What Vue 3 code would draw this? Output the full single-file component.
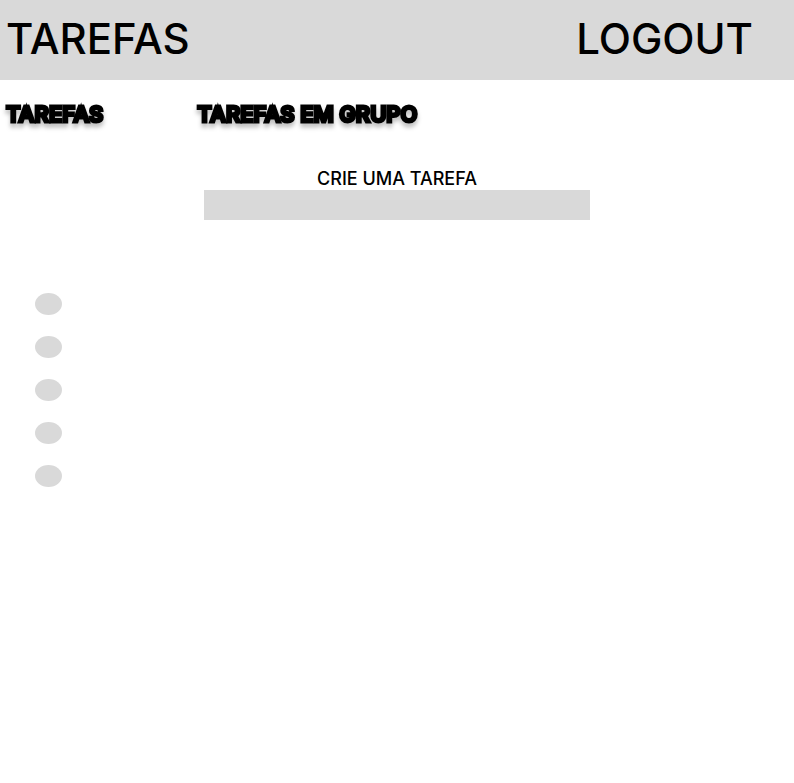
<script setup>
import { ref } from 'vue'

const title = ref('')
const tasks = ref([1, 2, 3, 4, 5].map((id) => ({ id, done: false })))
</script>

<template>
  <div class="page">
    <header class="topbar">
      <h1 class="brand">TAREFAS</h1>
      <button class="logout" type="button">LOGOUT</button>
    </header>
    <nav class="tabs">
      <a class="tab" href="#tarefas">TAREFAS</a>
      <a class="tab" href="#grupo">TAREFAS EM GRUPO</a>
    </nav>
    <main>
      <form class="create" @submit.prevent>
        <label class="create-label" for="new-task">CRIE UMA TAREFA</label>
        <input id="new-task" v-model="title" class="create-input" type="text" />
      </form>
      <ul class="tasks">
        <li v-for="task in tasks" :key="task.id" class="task">
          <input v-model="task.done" class="check" type="checkbox" :aria-label="`Tarefa ${task.id}`" />
        </li>
      </ul>
    </main>
  </div>
</template>

<style>
body {
  background: #fff;
}
</style>

<style scoped>
.page {
  color: #000;
  font-family: Inter, sans-serif;
  font-weight: 500;
}
.topbar {
  display: flex;
  align-items: center;
  justify-content: space-between;
  padding: 13px 41px 15px 6px;
  background: #d9d9d9;
}
.brand,
.logout {
  margin: 0;
  padding: 0;
  border: 0;
  background: none;
  color: inherit;
  font: 500 42px/52px Inter, sans-serif;
}
.tabs {
  display: flex;
  gap: 94px;
  padding: 20px 6px 0;
}
.tab {
  color: inherit;
  font-size: 22px;
  font-weight: 600;
  line-height: 28px;
  text-decoration: none;
  -webkit-text-stroke: 3px #000;
  filter: drop-shadow(0 4px 2px rgba(0, 0, 0, 0.25));
}
.create {
  display: flex;
  flex-direction: column;
  align-items: center;
  margin-top: 40px;
}
.create-label {
  font-size: 18px;
  line-height: 22px;
}
.create-input {
  box-sizing: border-box;
  width: 48.7%;
  height: 30px;
  padding: 0 8px;
  border: 0;
  background: #d9d9d9;
  font: 400 18px/22px Inter, sans-serif;
}
.tasks {
  display: flex;
  flex-direction: column;
  gap: 21px;
  margin: 73px 0 0;
  padding: 0 35px;
  list-style: none;
}
.task {
  display: flex;
}
.check {
  appearance: none;
  width: 27px;
  height: 22px;
  margin: 0;
  border-radius: 50%;
  background: #d9d9d9;
}
.check:checked {
  background: #8c8c8c;
}
</style>
